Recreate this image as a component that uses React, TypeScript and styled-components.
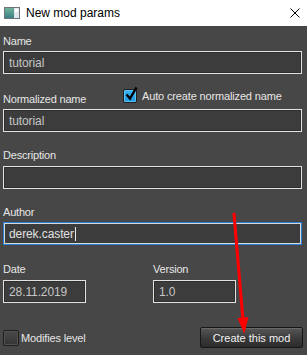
import React from "react";
import styled, { createGlobalStyle } from "styled-components";

const Global = createGlobalStyle`
  html, body { margin: 0; padding: 0; background: #474747; }
  body {
    width: 307px;
    height: 355px;
    overflow: hidden;
    font-family: "Liberation Sans", Arial, sans-serif;
  }
`;

const Window = styled.div`
  position: relative;
  width: 307px;
  height: 355px;
  display: flex;
  flex-direction: column;
  background: #474747;
`;

const TitleBar = styled.div`
  height: 26px;
  flex-shrink: 0;
  background: #ffffff;
  display: flex;
  align-items: center;
  padding: 0 7px 0 4px;
  gap: 6px;
`;

const Title = styled.span`
  flex: 1;
  font-size: 12px;
  color: #000;
  margin-top: -1px;
`;

const Form = styled.div`
  display: flex;
  flex-direction: column;
  padding: 0 5px 0 3px;
`;

const Label = styled.div<{ $top: number }>`
  margin-top: ${(p) => p.$top}px;
  height: 14px;
  line-height: 14px;
  font-size: 11px;
  letter-spacing: -0.2px;
  color: #e6e6e6;
  white-space: nowrap;
`;

const TextBox = styled.div<{ $gap: number; $focused?: boolean; $width?: number }>`
  margin-top: ${(p) => p.$gap}px;
  box-sizing: border-box;
  height: 23px;
  width: ${(p) => (p.$width ? `${p.$width}px` : "100%")};
  background: #3c3c3c;
  border: 1px solid ${(p) => (p.$focused ? "#2a7fd4" : "#e2e2e2")};
  box-shadow: inset 0 0 0 1px ${(p) => (p.$focused ? "#d8d8d8" : "#2e2e2e")};
  display: flex;
  align-items: center;
  padding-left: 5px;
  font-size: 12px;
  letter-spacing: -0.1px;
  color: ${(p) => (p.$focused ? "#e0e0e0" : "#c6c6c6")};
  white-space: nowrap;
`;

const Caret = styled.span`
  display: inline-block;
  width: 1px;
  height: 14px;
  background: #e8e8e8;
  margin-left: 1px;
`;

const CheckRow = styled.div<{ $top: number }>`
  margin-top: ${(p) => p.$top}px;
  height: 18px;
  display: flex;
  align-items: center;
`;

const RowLabel = styled.div`
  width: 120px;
  font-size: 11px;
  letter-spacing: -0.2px;
  color: #e6e6e6;
  padding-top: 5px;
  white-space: nowrap;
`;

const CheckLabel = styled.span`
  font-size: 11px;
  letter-spacing: -0.15px;
  color: #e6e6e6;
  white-space: nowrap;
`;

const CheckBox = styled.span<{ $checked?: boolean; $size: number }>`
  position: relative;
  box-sizing: border-box;
  width: ${(p) => p.$size}px;
  height: ${(p) => p.$size}px;
  flex-shrink: 0;
  border: 1px solid #1f1f1f;
  border-radius: 2px;
  background: ${(p) =>
    p.$checked
      ? "linear-gradient(#3ab4f2, #1e96dc)"
      : "linear-gradient(#4a4a4a, #343434)"};
  box-shadow: inset 0 0 0 1px ${(p) => (p.$checked ? "#5cc4f4" : "#505050")};
  margin-right: ${(p) => (p.$checked ? 5 : 2)}px;
`;

const CheckMark = styled.svg`
  position: absolute;
  left: 1px;
  top: -3px;
`;

const DateGrid = styled.div`
  margin-top: 17px;
  display: grid;
  grid-template-columns: 150px 83px;
  row-gap: 4px;
`;

const GridLabel = styled.div`
  height: 14px;
  line-height: 14px;
  font-size: 11px;
  letter-spacing: -0.2px;
  color: #e6e6e6;
`;

const BottomRow = styled.div`
  margin-top: 24px;
  display: flex;
  align-items: center;
  justify-content: space-between;
`;

const LeftGroup = styled.div`
  display: flex;
  align-items: center;
`;

const Button = styled.button`
  box-sizing: border-box;
  width: 103px;
  height: 21px;
  margin-right: -1px;
  padding: 0;
  border: 1px solid #161616;
  border-radius: 2px;
  background: linear-gradient(#575757, #3a3a3a 55%, #2c2c2c);
  box-shadow: inset 0 1px 0 #6a6a6a;
  color: #f2f2f2;
  font-family: "Liberation Sans", Arial, sans-serif;
  font-size: 11px;
`;

const Arrow = styled.svg`
  position: absolute;
  left: 0;
  top: 0;
  pointer-events: none;
`;

const AppIcon = () => (
  <svg width="16" height="12" viewBox="0 0 16 12">
    <defs>
      <linearGradient id="ig" x1="0" y1="0" x2="0" y2="1">
        <stop offset="0" stopColor="#6fb39a" />
        <stop offset="1" stopColor="#3b7f86" />
      </linearGradient>
    </defs>
    <rect x="0.5" y="0.5" width="15" height="11" fill="#9aa3ab" stroke="#6d747b" />
    <rect x="1" y="1" width="9" height="10" fill="url(#ig)" />
    <rect x="10" y="1" width="5" height="10" fill="#dfe6ee" />
    <rect x="11" y="2" width="3" height="3" fill="#ffffff" />
  </svg>
);

const CloseIcon = () => (
  <svg width="10" height="10" viewBox="0 0 10 10">
    <path d="M0.5 0.5 L9.5 9.5 M9.5 0.5 L0.5 9.5" stroke="#000" strokeWidth="1" />
  </svg>
);

export default function App() {
  return (
    <Window>
      <Global />
      <TitleBar>
        <AppIcon />
        <Title>New mod params</Title>
        <CloseIcon />
      </TitleBar>
      <Form>
        <Label $top={8}>Name</Label>
        <TextBox $gap={3}>tutorial</TextBox>

        <CheckRow $top={13}>
          <RowLabel>Normalized name</RowLabel>
          <CheckBox $checked $size={14}>
            <CheckMark width="13" height="14" viewBox="0 0 13 14">
              <path d="M1.5 7.5 L5 11.5 L11.5 0.5" fill="none" stroke="#000" strokeWidth="2.4" />
            </CheckMark>
          </CheckBox>
          <CheckLabel>Auto create normalized name</CheckLabel>
        </CheckRow>
        <TextBox $gap={4}>tutorial</TextBox>

        <Label $top={16}>Description</Label>
        <TextBox $gap={4} />

        <Label $top={16}>Author</Label>
        <TextBox $gap={3} $focused>
          derek.caster
          <Caret />
        </TextBox>

        <DateGrid>
          <GridLabel>Date</GridLabel>
          <GridLabel>Version</GridLabel>
          <TextBox $gap={0} $width={83}>28.11.2019</TextBox>
          <TextBox $gap={0} $width={83}>1.0</TextBox>
        </DateGrid>

        <BottomRow>
          <LeftGroup>
            <CheckBox $size={16} />
            <CheckLabel>Modifies level</CheckLabel>
          </LeftGroup>
          <Button>Create this mod</Button>
        </BottomRow>
      </Form>

      <Arrow width="307" height="355" viewBox="0 0 307 355">
        <path d="M234 214 L243 320" stroke="#ff0000" strokeWidth="3" strokeLinecap="round" />
        <path d="M237.5 318 L248.5 317 L244.3 334 Z" fill="#ff0000" />
      </Arrow>
    </Window>
  );
}
